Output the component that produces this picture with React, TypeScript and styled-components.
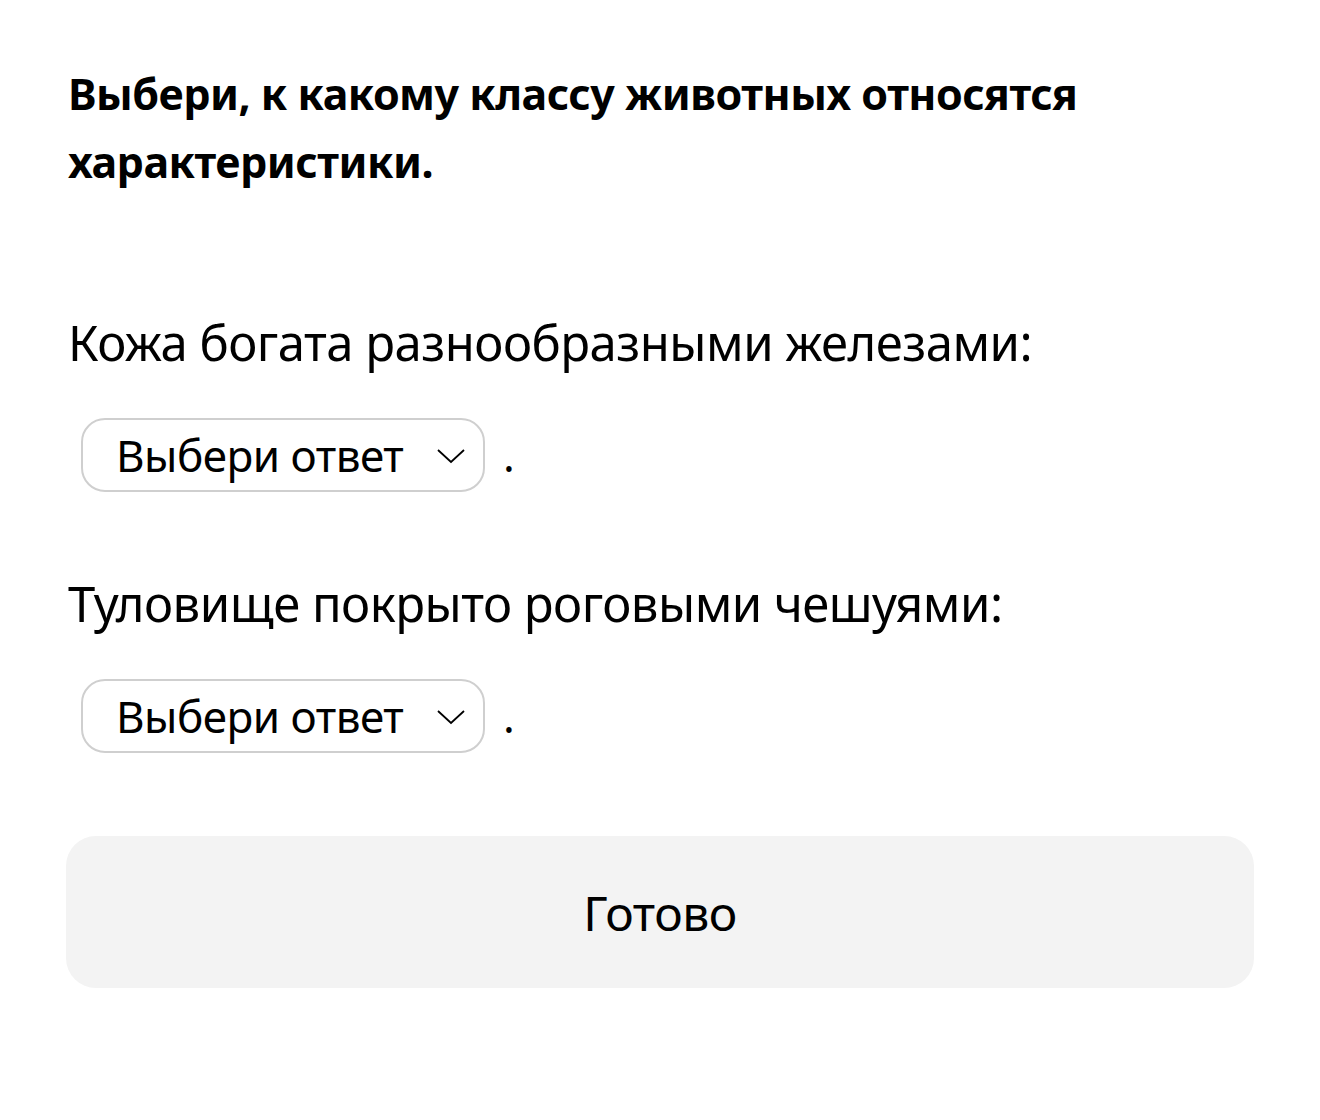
import React from "react";
import styled, { createGlobalStyle } from "styled-components";

const Global = createGlobalStyle`
  html, body { margin: 0; padding: 0; background: #fff; }
  body { font-family: "Noto Sans", "Open Sans", sans-serif; color: #000; }
`;

const Page = styled.div`
  width: 1320px;
  box-sizing: border-box;
  padding: 60px 66px 0 68px;
  display: flex;
  flex-direction: column;
`;

const Title = styled.h1`
  margin: 0;
  font-size: 43px;
  font-weight: 700;
  line-height: 68px;
  letter-spacing: -0.5px;
`;

const Question = styled.div<{ $first?: boolean }>`
  margin-top: ${(p) => (p.$first ? "113px" : "78px")};
  display: flex;
  flex-direction: column;
`;

const Label = styled.p`
  margin: 0;
  font-size: 49px;
  line-height: 66px;
  letter-spacing: -0.5px;
`;

const AnswerRow = styled.div`
  margin-top: 43px;
  padding-left: 13px;
  display: flex;
  align-items: center;
  gap: 18px;
`;

const Select = styled.button`
  box-sizing: border-box;
  width: 404px;
  height: 74px;
  border: 2.5px solid #cfcfcf;
  border-radius: 24px;
  background: #fff;
  display: flex;
  align-items: center;
  justify-content: space-between;
  padding: 0 17px 0 33px;
  font-family: inherit;
  font-size: 44px;
  color: #000;
  letter-spacing: -0.5px;
`;

const Dot = styled.span`
  font-size: 44px;
  line-height: 1;
`;

const Done = styled.button`
  margin-top: 83px;
  width: 1188px;
  height: 152px;
  margin-left: -2px;
  border: none;
  border-radius: 30px;
  background: #f3f3f3;
  font-family: inherit;
  font-size: 48px;
  color: #000;
  letter-spacing: -0.5px;
`;

const Chevron = () => (
  <svg width="30" height="18" viewBox="0 0 30 18" fill="none">
    <path d="M2 4 L15 16 L28 4" stroke="#000" strokeWidth="1.8" />
  </svg>
);

const items = [
  "Кожа богата разнообразными железами:",
  "Туловище покрыто роговыми чешуями:",
];

export default function App() {
  return (
    <Page>
      <Global />
      <Title>
        Выбери, к какому классу животных относятся
        <br />
        характеристики.
      </Title>
      {items.map((t, i) => (
        <Question key={i} $first={i === 0}>
          <Label>{t}</Label>
          <AnswerRow>
            <Select>
              <span>Выбери ответ</span>
              <Chevron />
            </Select>
            <Dot>.</Dot>
          </AnswerRow>
        </Question>
      ))}
      <Done>Готово</Done>
    </Page>
  );
}
